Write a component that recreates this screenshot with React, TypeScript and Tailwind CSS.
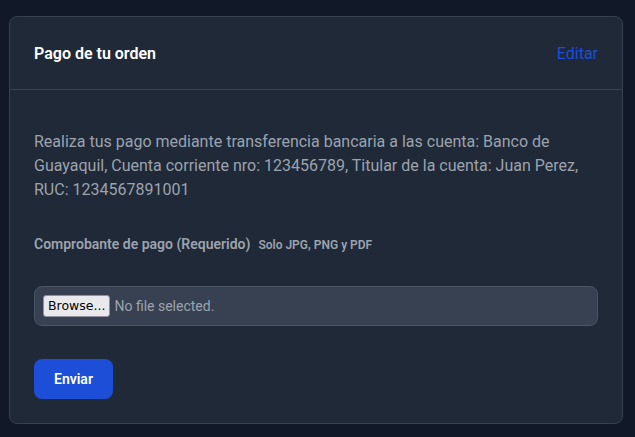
import * as React from 'react';

const font = { fontFamily: 'Roboto, "Noto Sans", sans-serif' }

function FilePicker() {
  return (
    <label className="flex items-center h-10 w-full px-2 gap-1 bg-[#374151] border border-[#4b5563] rounded-lg cursor-pointer">
      <input type="file" accept=".jpg,.png,.pdf" className="hidden" />
      <span className="h-[22px] px-[4px] flex items-center bg-[#e9e9ed] border border-[#8f8f9d] rounded-[3px] text-[12.5px] text-black font-['DejaVu_Sans',sans-serif]">
        Browse...
      </span>
      <span className="text-sm text-[#9ca3af]">No file selected.</span>
    </label>
  )
}

export default function App() {
  return (
    <div className="min-h-[437px] bg-[#111827] pt-4 pl-[9px] pr-3" style={font}>
      <div className="bg-[#1f2937] border border-[#374151] rounded-lg">
        <div className="flex justify-between items-center h-[73px] pt-0.5 px-6 border-b border-[#374151]">
          <h3 className="text-base font-semibold text-white">Pago de tu orden</h3>
          <a href="#" className="text-base text-[#1d4ed8] hover:underline">Editar</a>
        </div>
        <div className="px-6 pt-10 pb-6">
          <p className="text-base leading-6 text-[#9ca3af]">
            Realiza tus pago mediante transferencia bancaria a las cuenta: Banco de Guayaquil, Cuenta corriente nro: 123456789, Titular de la cuenta: Juan Perez, RUC: 1234567891001
          </p>
          <div className="mt-8 text-sm font-semibold text-[#9ca3af]">
            Comprobante de pago (Requerido)
            <span className="ml-2 text-xs">Solo JPG, PNG y PDF</span>
          </div>
          <div className="mt-8">
            <FilePicker />
          </div>
          <button className="mt-[33px] h-10 px-5 bg-[#1d4ed8] hover:bg-[#1e40af] text-white text-sm font-semibold rounded-lg">
            Enviar
          </button>
        </div>
      </div>
    </div>
  )
}
